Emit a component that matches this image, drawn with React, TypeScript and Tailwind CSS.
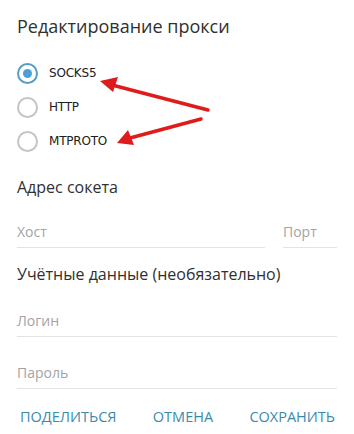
import React, { useState } from 'react';

const OPTIONS = ['SOCKS5', 'HTTP', 'MTPROTO'];

const Radio = ({ checked }: { checked: boolean }) => (
  <span
    className={`w-[21px] h-[21px] rounded-full border-2 flex items-center justify-center shrink-0 ${
      checked ? 'border-[#5b9cc4]' : 'border-[#c4c4c4]'
    }`}
  >
    {checked && <span className="w-[9px] h-[9px] rounded-full bg-[#4a9fdc]" />}
  </span>
);

const Field = ({ placeholder, className = '' }: { placeholder: string; className?: string }) => (
  <div className={`border-b border-[#e3e3e3] pb-[4px] ${className}`}>
    <span className="text-[14px] text-[#a3a3a3] leading-[20px]">{placeholder}</span>
  </div>
);

const App: React.FC = () => {
  const [proto, setProto] = useState('SOCKS5');

  return (
    <div className="relative w-[354px] h-[434px] bg-white font-['Open_Sans',sans-serif] text-[#2f2f2f] overflow-hidden">
      <div className="pl-[17px] pr-[17px] pt-[14px]">
        <h1 className="text-[18px] leading-[24px] text-[#303030]">Редактирование прокси</h1>

        <div className="mt-[24px] flex flex-col gap-[12px]">
          {OPTIONS.map(o => (
            <label key={o} className="flex items-center gap-[11px] h-[22px] cursor-pointer" onClick={() => setProto(o)}>
              <Radio checked={proto === o} />
              <span className="text-[12px] text-[#202020] font-['DejaVu_Sans',sans-serif] tracking-[-0.2px]">{o}</span>
            </label>
          ))}
        </div>

        <h2 className="mt-[24px] text-[16px] leading-[22px] text-[#303030]">Адрес сокета</h2>

        <div className="mt-[21px] flex gap-[18px]">
          <Field placeholder="Хост" className="w-[248px]" />
          <Field placeholder="Порт" className="flex-1" />
        </div>

        <h2 className="mt-[15px] text-[16px] leading-[22px] text-[#303030]">Учётные данные (необязательно)</h2>

        <Field placeholder="Логин" className="mt-[23px]" />
        <Field placeholder="Пароль" className="mt-[23px]" />

        <div className="mt-[18px] flex justify-between text-[14.5px] text-[#3a8bab] leading-[20px] pl-[3px] pr-[2px]">
          <button>ПОДЕЛИТЬСЯ</button>
          <button>ОТМЕНА</button>
          <button>СОХРАНИТЬ</button>
        </div>
      </div>

      {/* red annotation arrows */}
      <svg className="absolute left-0 top-0 pointer-events-none" width="354" height="434">
        <g stroke="#e01b1b" strokeWidth="3.5" strokeLinecap="round" fill="none">
          <line x1="208" y1="110" x2="112" y2="85" />
          <line x1="201" y1="119" x2="130" y2="138" />
        </g>
        <polygon points="100,81 118,77 113,92" fill="#e01b1b" />
        <polygon points="117,143 128,130 134,145" fill="#e01b1b" />
      </svg>
    </div>
  );
};

export default App;
